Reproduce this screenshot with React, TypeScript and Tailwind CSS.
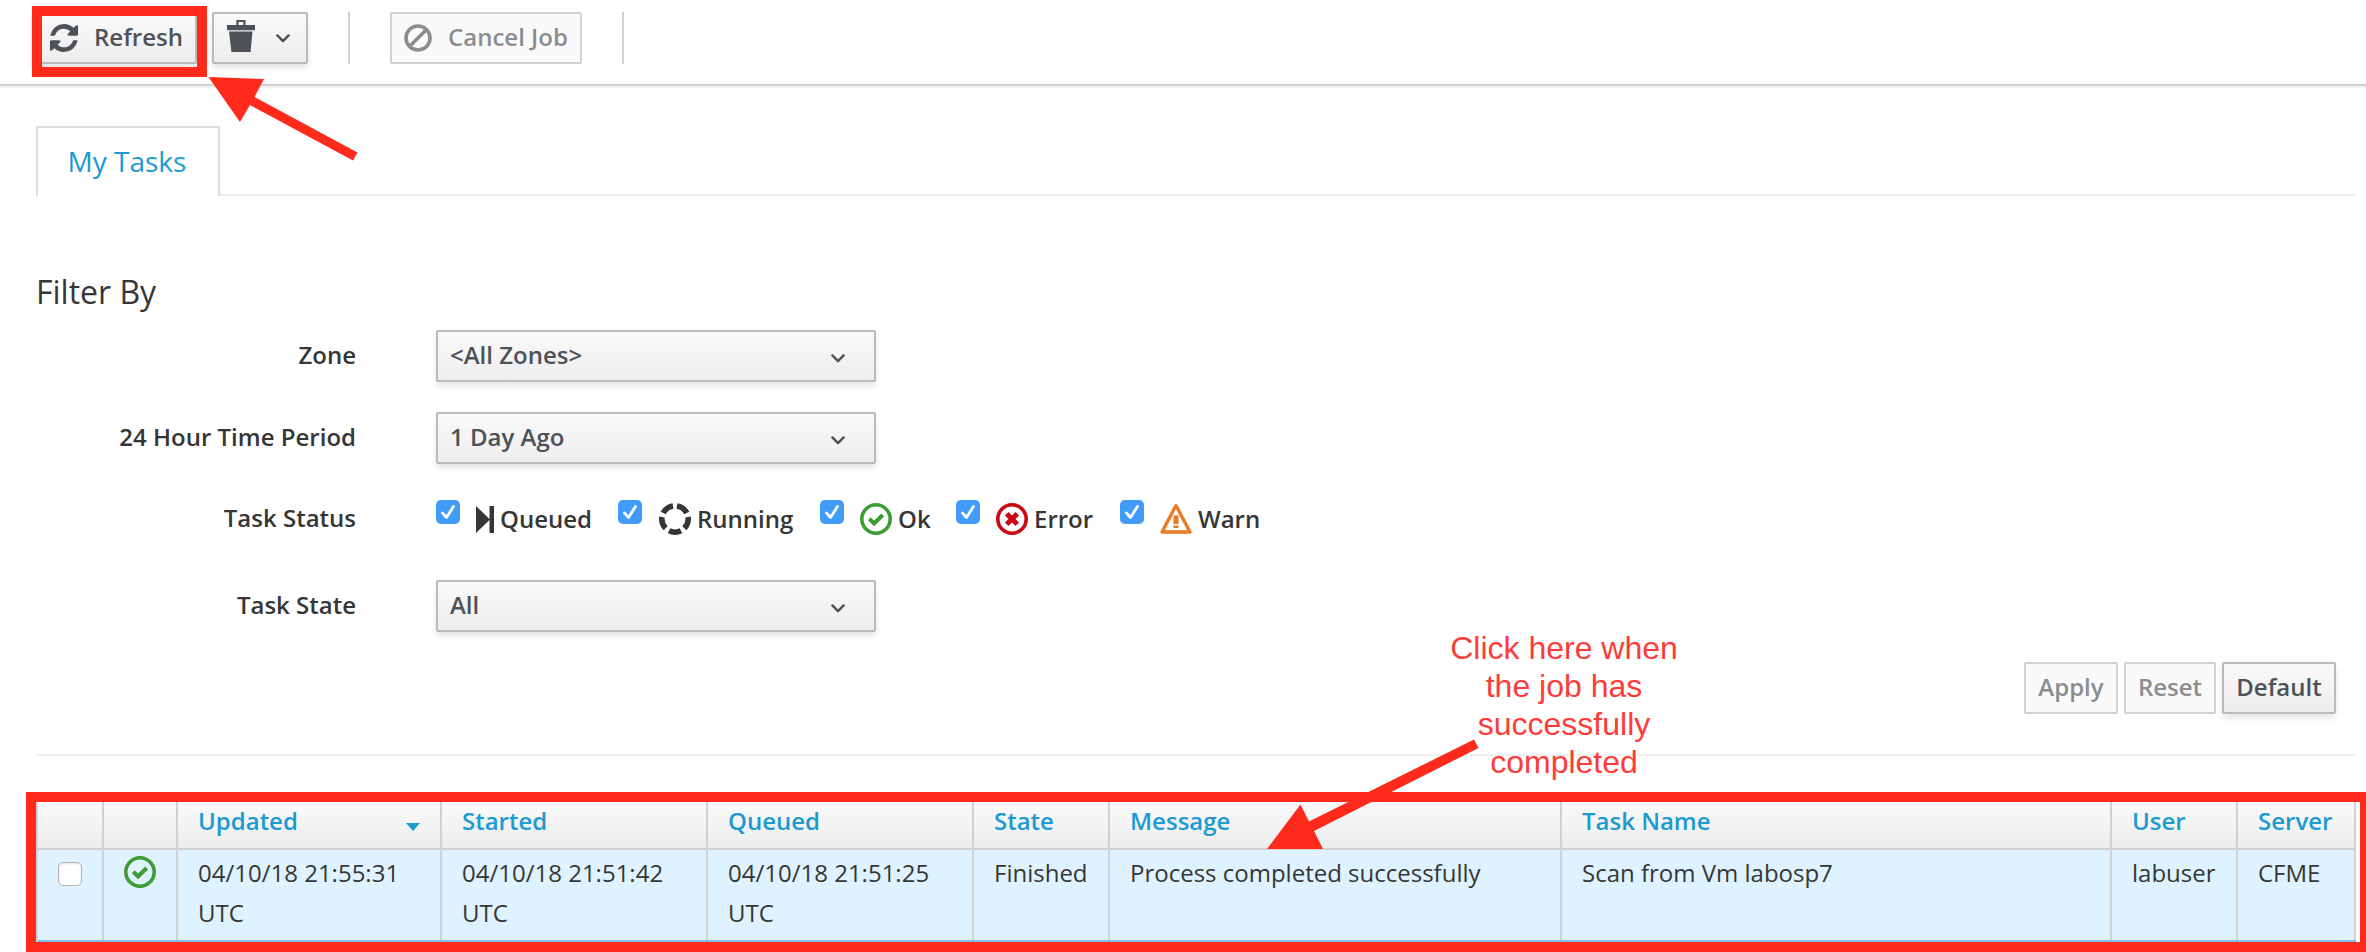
import React from "react";

const GRADIENT = "bg-linear-to-b from-[#fafafa] to-[#ededed]";

function Chevron({ className = "" }: { className?: string }) {
  return (
    <svg viewBox="0 0 14 9" className={`h-[9px] w-[14px] shrink-0 ${className}`} fill="none" stroke="#4d5258" strokeWidth="2.4" strokeLinecap="round" strokeLinejoin="round">
      <path d="M1.4 1.4 7 7.2l5.600-5.800" />
    </svg>
  );
}

function RefreshIcon() {
  return (
    <svg viewBox="0 0 1536 1536" className="h-[28px] w-[28px] shrink-0" fill="#4d5258">
      <path d="M1511 928q0 5-1 7-64 268-268 434.500T764 1536q-146 0-282.500-55T238 1324l-129 129q-19 19-45 19t-45-19-19-45V960q0-26 19-45t45-19h448q26 0 45 19t19 45-19 45l-137 137q71 66 161 102t187 36q134 0 250-65t186-179q11-17 53-117 8-23 30-23h192q13 0 22.500 9.500t9.500 22.500zm25-800v448q0 26-19 45t-45 19h-448q-26 0-45-19t-19-45 19-45l138-138Q969 256 768 256q-134 0-250 65T332 500q-11 17-53 117-8 23-30 23H50q-13 0-22.500-9.500T18 608v-7q65-268 270-434.500T768 0q146 0 284 55.500T1297 212l130-129q19-19 45-19t45 19 19 45z" />
    </svg>
  );
}

function TrashIcon() {
  return (
    <svg viewBox="0 0 28 32" className="h-[32px] w-[28px] shrink-0" fill="#4d5258">
      <path fillRule="evenodd" d="M9.300 0h9.200v5H28v5.200H0V5h9.300zM11.500 2v3h4.800V2z" />
      <path d="M2 11.400h23.500L23.600 32H4.400z" />
    </svg>
  );
}

function BanIcon() {
  return (
    <svg viewBox="0 0 28 28" className="h-[28px] w-[28px] shrink-0" fill="none" stroke="#8b8d8f" strokeWidth="3.600">
      <circle cx="14" cy="14" r="12" />
      <path d="M22.300 5.700 5.700 22.300" />
    </svg>
  );
}

function QueuedIcon() {
  return (
    <svg viewBox="0 0 18 27" className="h-[27px] w-[18px] shrink-0" fill="#363636">
      <path d="M0 0l14 13.500L0 27zM13.500 0H18v27h-4.500z" />
    </svg>
  );
}

function RunningIcon() {
  return (
    <svg viewBox="-16 -16 32 32" className="h-[32px] w-[32px] shrink-0" fill="none" stroke="#363636" strokeWidth="5.600">
      <circle r="13.200" pathLength="100" strokeDasharray="15 5" strokeDashoffset="-2.500" transform="rotate(-90)" />
    </svg>
  );
}

function OkIcon() {
  return (
    <svg viewBox="0 0 32 32" className="h-[32px] w-[32px] shrink-0" fill="none" stroke="#3f9c35">
      <circle cx="16" cy="16" r="14.200" strokeWidth="3.600" />
      <path d="M9.300 15.800l4.800 4.600 8.600-8.400" strokeWidth="4.200" />
    </svg>
  );
}

function ErrorIcon() {
  return (
    <svg viewBox="0 0 32 32" className="h-[32px] w-[32px] shrink-0" fill="none" stroke="#c90813">
      <circle cx="16" cy="16" r="14.200" strokeWidth="3.600" />
      <path d="M10.700 10.700l10.600 10.600M21.300 10.700 10.700 21.300" strokeWidth="5" />
    </svg>
  );
}

function WarnIcon() {
  return (
    <svg viewBox="0 0 32 32" className="h-[32px] w-[32px] shrink-0">
      <path d="M16 2.500 30 29H2z" fill="none" stroke="#ea7a26" strokeWidth="3.400" strokeLinejoin="round" />
      <path d="M13.500 12.500h5v8.500h-5zM13.500 22.500h5v2.500h-5z" fill="#ea7a26" />
    </svg>
  );
}

function CheckedBox() {
  return (
    <span className="mb-[14px] flex h-6 w-6 shrink-0 items-center justify-center rounded-[5px] bg-[#419bf9]">
      <svg viewBox="0 0 24 24" className="h-6 w-6" fill="none" stroke="#fff" strokeWidth="2.800" strokeLinecap="round" strokeLinejoin="round">
        <path d="M6.500 13l4 4.500L17.500 6.500" />
      </svg>
    </span>
  );
}

function Select({ value }: { value: string }) {
  return (
    <button className={`ml-20 flex h-[52px] w-[440px] items-center justify-between rounded-[2px] border-2 border-[#bbb] pr-[29px] pl-3 text-[#4d5258] shadow-[0_4px_6px_rgba(3,3,3,0.1)] ${GRADIENT}`}>
      <span className="pb-[2px]">{value}</span>
      <Chevron className="mt-1" />
    </button>
  );
}

function Label({ children }: { children: React.ReactNode }) {
  return <div className="w-[356px] pb-[2px] text-right">{children}</div>;
}

const statuses = [
  { name: "Queued", icon: <QueuedIcon />, box: "w-[182px]", gap: "ml-[16px] gap-[6px]" },
  { name: "Running", icon: <RunningIcon />, box: "w-[202px]", gap: "ml-[17px] gap-[6px]" },
  { name: "Ok", icon: <OkIcon />, box: "w-[136px]", gap: "ml-[16px] gap-[6px]" },
  { name: "Error", icon: <ErrorIcon />, box: "w-[164px]", gap: "ml-[16px] gap-[6px]" },
  { name: "Warn", icon: <WarnIcon />, box: "w-[160px]", gap: "ml-[16px] gap-[6px]" },
];

const columns = [
  { title: "Updated", value: "04/10/18 21:55:31 UTC", width: "w-[264px]", sorted: true },
  { title: "Started", value: "04/10/18 21:51:42 UTC", width: "w-[266px]" },
  { title: "Queued", value: "04/10/18 21:51:25 UTC", width: "w-[266px]" },
  { title: "State", value: "Finished", width: "w-[136px]" },
  { title: "Message", value: "Process completed successfully", width: "w-[452px]" },
  { title: "Task Name", value: "Scan from Vm labosp7", width: "w-[550px]" },
  { title: "User", value: "labuser", width: "w-[126px]" },
  { title: "Server", value: "CFME", width: "w-[118px]" },
];

function Toolbar() {
  return (
    <header className="h-[88px] border-b-2 border-[#f3f3f3] text-[24px] font-semibold">
      <div className="flex h-[86px] w-full items-start border-b-2 border-[#d1d1d1] pt-[12px] pl-[32px]">
        <button className={`flex h-[52px] w-[165px] items-center rounded-[2px] border-2 border-[#bbb] pl-4 text-[#4d5258] shadow-[0_4px_6px_rgba(3,3,3,0.1)] ${GRADIENT}`}>
          <RefreshIcon />
          <span className="ml-[16px] pb-[2px]">Refresh</span>
        </button>
        <button className={`ml-[15px] flex h-[52px] w-[96px] items-center rounded-[2px] border-2 border-[#bbb] pl-[13px] text-[#4d5258] shadow-[0_4px_6px_rgba(3,3,3,0.1)] ${GRADIENT}`}>
          <span className="-mt-1"><TrashIcon /></span>
          <Chevron className="ml-[21px]" />
        </button>
        <div className="ml-[40px] h-[52px] w-[2px] bg-[#d1d1d1]" />
        <button className="ml-[40px] flex h-[52px] w-[192px] items-center rounded-[2px] border-2 border-[#d1d1d1] bg-[#fafafa] pl-[12px] text-[#8b8d8f]">
          <BanIcon />
          <span className="ml-[16px] pb-[2px] whitespace-nowrap">Cancel Job</span>
        </button>
        <div className="ml-[40px] h-[52px] w-[2px] bg-[#d1d1d1]" />
      </div>
    </header>
  );
}

function Filters() {
  return (
    <section className="font-semibold">
      <h3 className="mt-[72px] ml-9 h-[48px] text-[32px] leading-[48px] font-normal">Filter By</h3>
      <div className="mt-[14px] flex items-center"><Label>Zone</Label><Select value="<All Zones>" /></div>
      <div className="mt-[30px] flex items-center"><Label>24 Hour Time Period</Label><Select value="1 Day Ago" /></div>
      <div className="mt-[29px] flex h-[52px] items-center">
        <Label>Task Status</Label>
        <div className="ml-20 flex items-center">
          {statuses.map((s) => (
            <label key={s.name} className={`flex items-center ${s.box}`}>
              <CheckedBox />
              <span className={`flex items-center ${s.gap}`}>{s.icon}<span>{s.name}</span></span>
            </label>
          ))}
        </div>
      </div>
      <div className="mt-[35px] flex items-center"><Label>Task State</Label><Select value="All" /></div>
      <div className="mt-[30px] mr-[30px] flex justify-end gap-[6px]">
        <button className="h-[52px] w-[94px] rounded-[2px] border-2 border-[#d1d1d1] bg-[#fafafa] pb-[2px] text-[#8b8d8f]">Apply</button>
        <button className="h-[52px] w-[92px] rounded-[2px] border-2 border-[#d1d1d1] bg-[#fafafa] pb-[2px] text-[#8b8d8f]">Reset</button>
        <button className={`h-[52px] w-[114px] rounded-[2px] border-2 border-[#bbb] pb-[2px] text-[#4d5258] shadow-[0_4px_6px_rgba(3,3,3,0.1)] ${GRADIENT}`}>Default</button>
      </div>
      <hr className="mt-[40px] mr-[10px] ml-9 border-t-2 border-[#f1f1f1]" />
    </section>
  );
}

function TaskTable() {
  return (
    <div className="mt-[46px] ml-9 w-[2320px] border-l-2 border-[#d1d1d1]">
      <div className={`flex h-[48px] border-b-2 border-[#d1d1d1] font-semibold text-[#1c9ad2] ${GRADIENT}`}>
        <div className="w-[66px] border-r-2 border-[#d1d1d1]" />
        <div className="w-[74px] border-r-2 border-[#d1d1d1]" />
        {columns.map((c) => (
          <div key={c.title} className={`flex items-start justify-between border-r-2 border-[#d1d1d1] pl-5 leading-[38px] ${c.width}`}>
            <span className="whitespace-nowrap">{c.title}</span>
            {c.sorted && (
              <svg viewBox="0 0 14 8" className="mt-[21px] mr-[20px] h-[8px] w-[14px]" fill="#1c9ad2"><path d="M0 0h14L7 8z" /></svg>
            )}
          </div>
        ))}
      </div>
      <div className="flex h-[92px] border-b-2 border-[#7dc3e8] bg-[#def3ff]">
        <div className="w-[66px] border-r-2 border-[#d1d1d1] pt-3 pl-5">
          <div className="h-6 w-6 rounded-[5px] border border-[#b3b3b3] bg-white shadow-[inset_0_1px_2px_rgba(0,0,0,0.12)]" />
        </div>
        <div className="w-[74px] border-r-2 border-[#d1d1d1] pt-[6px] pl-5"><OkIcon /></div>
        {columns.map((c) => (
          <div key={c.title} className={`border-r-2 border-[#d1d1d1] pt-[3px] pl-5 leading-[40px] ${c.width}`}>{c.value}</div>
        ))}
      </div>
    </div>
  );
}

function Annotations() {
  return (
    <>
      <div className="absolute top-[6px] left-[32px] h-[71px] w-[175px] border-[10px] border-[#fe2b1d]" />
      <div className="absolute top-[792px] left-[26px] h-[160px] w-[2344px] border-[10px] border-[#fe2b1d]" />
      <svg viewBox="0 0 2366 952" className="pointer-events-none absolute top-0 left-0 h-[952px] w-[2366px]" fill="#fe2b1d">
        <path d="M208.500 77 264 79l-9.500 18L357.500 152.500l-4.500 8L250 105l-10 17z" />
        <path d="M1267 849 1300.500 804.500 1309 821.500 1474 739.500 1478.500 748 1314 831 1323 849z" />
      </svg>
      <div className="absolute top-[629px] left-[1400px] w-[328px] text-center font-['Liberation_Sans',sans-serif] text-[32px] leading-[38px] text-[#ff3b38]">
        Click here when<br />the job has<br />successfully<br />completed
      </div>
    </>
  );
}

export default function App() {
  return (
    <main className="relative h-[952px] w-[2366px] overflow-hidden bg-white font-['Open_Sans',sans-serif] text-[24px] text-[#363636]">
      <Toolbar />
      <nav className="mt-[38px] mr-[10px] ml-9 flex h-[70px] text-[28px] text-[#1c9ad2]">
        <div className="flex w-[184px] items-center justify-center rounded-t-[2px] border-2 border-b-0 border-[#ddd] pr-[2px] pb-[2px]">My Tasks</div>
        <div className="flex-1 border-b-2 border-[#ededed]" />
      </nav>
      <Filters />
      <TaskTable />
      <Annotations />
    </main>
  );
}
